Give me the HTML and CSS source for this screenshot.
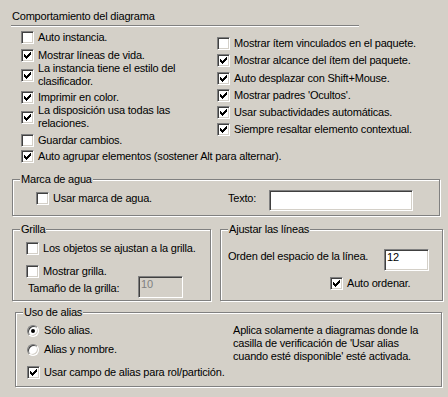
FILE: index.html
```html
<!DOCTYPE html>
<html lang="es">
<head>
<meta charset="utf-8">
<title>Comportamiento del diagrama</title>
<link rel="stylesheet" href="styles.css">
</head>
<body>
<div class="dialog">
  <div class="heading">Comportamiento del diagrama</div>
  <div class="sep"></div>

  <div class="cols">
    <div class="col">
      <div class="opt"><span class="cb"></span><span>Auto instancia.</span></div>
      <div class="opt mt5"><span class="cb on"><svg width="11" height="11" viewBox="0 0 11 11"><path d="M2 4h1v3H2zM3 5h1v3H3zM4 6h1v3H4zM5 5h1v3H5zM6 4h1v3H6zM7 3h1v3H7zM8 2h1v3H8z"/></svg></span><span>Mostrar líneas de vida.</span></div>
      <div class="opt"><span class="cb on"><svg width="11" height="11" viewBox="0 0 11 11"><path d="M2 4h1v3H2zM3 5h1v3H3zM4 6h1v3H4zM5 5h1v3H5zM6 4h1v3H6zM7 3h1v3H7zM8 2h1v3H8z"/></svg></span><span>La instancia tiene el estilo del<br>clasificador.</span></div>
      <div class="opt mt3"><span class="cb on"><svg width="11" height="11" viewBox="0 0 11 11"><path d="M2 4h1v3H2zM3 5h1v3H3zM4 6h1v3H4zM5 5h1v3H5zM6 4h1v3H6zM7 3h1v3H7zM8 2h1v3H8z"/></svg></span><span>Imprimir en color.</span></div>
      <div class="opt"><span class="cb on"><svg width="11" height="11" viewBox="0 0 11 11"><path d="M2 4h1v3H2zM3 5h1v3H3zM4 6h1v3H4zM5 5h1v3H5zM6 4h1v3H6zM7 3h1v3H7zM8 2h1v3H8z"/></svg></span><span>La disposición usa todas las<br>relaciones.</span></div>
      <div class="opt mt4"><span class="cb"></span><span>Guardar cambios.</span></div>
    </div>
    <div class="col col-right">
      <div class="opt"><span class="cb"></span><span>Mostrar ítem vinculados en el paquete.</span></div>
      <div class="opt mt4"><span class="cb on"><svg width="11" height="11" viewBox="0 0 11 11"><path d="M2 4h1v3H2zM3 5h1v3H3zM4 6h1v3H4zM5 5h1v3H5zM6 4h1v3H6zM7 3h1v3H7zM8 2h1v3H8z"/></svg></span><span>Mostrar alcance del ítem del paquete.</span></div>
      <div class="opt mt5"><span class="cb on"><svg width="11" height="11" viewBox="0 0 11 11"><path d="M2 4h1v3H2zM3 5h1v3H3zM4 6h1v3H4zM5 5h1v3H5zM6 4h1v3H6zM7 3h1v3H7zM8 2h1v3H8z"/></svg></span><span>Auto desplazar con Shift+Mouse.</span></div>
      <div class="opt mt4"><span class="cb on"><svg width="11" height="11" viewBox="0 0 11 11"><path d="M2 4h1v3H2zM3 5h1v3H3zM4 6h1v3H4zM5 5h1v3H5zM6 4h1v3H6zM7 3h1v3H7zM8 2h1v3H8z"/></svg></span><span>Mostrar padres 'Ocultos'.</span></div>
      <div class="opt mt4"><span class="cb on"><svg width="11" height="11" viewBox="0 0 11 11"><path d="M2 4h1v3H2zM3 5h1v3H3zM4 6h1v3H4zM5 5h1v3H5zM6 4h1v3H6zM7 3h1v3H7zM8 2h1v3H8z"/></svg></span><span>Usar subactividades automáticas.</span></div>
      <div class="opt mt4"><span class="cb on"><svg width="11" height="11" viewBox="0 0 11 11"><path d="M2 4h1v3H2zM3 5h1v3H3zM4 6h1v3H4zM5 5h1v3H5zM6 4h1v3H6zM7 3h1v3H7zM8 2h1v3H8z"/></svg></span><span>Siempre resaltar elemento contextual.</span></div>
    </div>
  </div>
  <div class="opt wide"><span class="cb on"><svg width="11" height="11" viewBox="0 0 11 11"><path d="M2 4h1v3H2zM3 5h1v3H3zM4 6h1v3H4zM5 5h1v3H5zM6 4h1v3H6zM7 3h1v3H7zM8 2h1v3H8z"/></svg></span><span>Auto agrupar elementos (sostener Alt para alternar).</span></div>

  <div class="group watermark">
    <span class="legend">Marca de agua</span>
    <div class="wm-row">
      <div class="opt wm-check"><span class="cb"></span><span>Usar marca de agua.</span></div>
      <span class="wm-label">Texto:</span>
      <div class="edit wm-edit"></div>
    </div>
  </div>

  <div class="pair">
    <div class="group grilla">
      <span class="legend">Grilla</span>
      <div class="g-rows">
        <div class="opt"><span class="cb"></span><span>Los objetos se ajustan a la grilla.</span></div>
        <div class="opt mt10"><span class="cb"></span><span>Mostrar grilla.</span></div>
        <div class="size-row">
          <span class="size-label">Tamaño de la grilla:</span>
          <div class="edit dis small">10</div>
        </div>
      </div>
    </div>
    <div class="group ajustar">
      <span class="legend">Ajustar las líneas</span>
      <div class="a-row">
        <span class="a-label">Orden del espacio de la línea.</span>
        <div class="edit small">12</div>
      </div>
      <div class="opt a-check"><span class="cb on"><svg width="11" height="11" viewBox="0 0 11 11"><path d="M2 4h1v3H2zM3 5h1v3H3zM4 6h1v3H4zM5 5h1v3H5zM6 4h1v3H6zM7 3h1v3H7zM8 2h1v3H8z"/></svg></span><span>Auto ordenar.</span></div>
    </div>
  </div>

  <div class="group alias">
    <span class="legend">Uso de alias</span>
    <div class="alias-body">
      <div class="alias-opts">
        <div class="opt mt11"><span class="rb on"></span><span>Sólo alias.</span></div>
        <div class="opt mt6"><span class="rb"></span><span>Alias y nombre.</span></div>
        <div class="opt mt10"><span class="cb on"><svg width="11" height="11" viewBox="0 0 11 11"><path d="M2 4h1v3H2zM3 5h1v3H3zM4 6h1v3H4zM5 5h1v3H5zM6 4h1v3H6zM7 3h1v3H7zM8 2h1v3H8z"/></svg></span><span>Usar campo de alias para rol/partición.</span></div>
      </div>
      <div class="alias-note">Aplica solamente a diagramas donde la<br>casilla de verificación de 'Usar alias<br>cuando esté disponible' esté activada.</div>
    </div>
  </div>
</div>
</body>
</html>
```

FILE: styles.css
```css
* { box-sizing: border-box; }

body {
  margin: 0;
  background: #d4d0c8;
  font-family: "Liberation Sans", Arial, sans-serif;
  font-size: 11px;
  line-height: 13px;
  color: #000;
  letter-spacing: -0.2px;
}

.dialog {
  width: 448px;
  height: 397px;
  overflow: hidden;
  padding-top: 10px;
}

.heading {
  margin-left: 12px;
  height: 13px;
}

.sep {
  margin: 2px 0 0 11px;
  width: 348px;
  height: 2px;
  border-top: 1px solid #808080;
  border-bottom: 1px solid #fff;
}

.cols {
  display: grid;
  grid-template-columns: 196px 1fr;
  margin-top: 4px;
  padding-left: 21px;
}

.col-right { padding-top: 6px; }

.opt {
  display: flex;
  align-items: center;
  gap: 4px;
  white-space: nowrap;
}

.mt3 { margin-top: 3px; }
.mt4 { margin-top: 4px; }
.mt5 { margin-top: 5px; }
.mt6 { margin-top: 6px; }
.mt10 { margin-top: 10px; }
.mt11 { margin-top: 11px; }

.cb {
  flex: none;
  width: 13px;
  height: 13px;
  border: 1px solid;
  border-color: #808080 #fff #fff #808080;
  box-shadow: inset 1px 1px 0 #404040, inset -1px -1px 0 #d4d0c8;
  background: #fff;
}

.cb svg {
  display: block;
  shape-rendering: crispEdges;
  fill: #000;
}

.rb {
  flex: none;
  width: 12px;
  height: 12px;
  margin-right: 1px;
  border-radius: 50%;
  border: 1px solid;
  border-color: #808080 #fff #fff #808080;
  box-shadow: inset 1px 1px 0 #404040, inset -1px -1px 0 #d4d0c8;
  background: #fff;
  display: flex;
  align-items: center;
  justify-content: center;
}

.rb.on::after {
  content: "";
  width: 4px;
  height: 4px;
  border-radius: 50%;
  background: #000;
}

.wide { margin: 3px 0 0 21px; }

.group {
  position: relative;
  border: 1px solid #808080;
  box-shadow: 1px 1px 0 #fff, inset 1px 1px 0 #fff;
}

.legend {
  position: absolute;
  top: -7px;
  left: 7px;
  padding: 0 1px;
  background: #d4d0c8;
  white-space: nowrap;
}

.edit {
  border: 1px solid;
  border-color: #808080 #fff #fff #808080;
  box-shadow: inset 1px 1px 0 #404040, inset -1px -1px 0 #d4d0c8;
  background: #fff;
  padding: 1px 0 0 2px;
}

.edit.dis {
  background: #d4d0c8;
  color: #808080;
}

.small {
  width: 45px;
  height: 22px;
}

/* Marca de agua */
.watermark {
  margin: 16px 0 0 12px;
  width: 428px;
  height: 37px;
}

.wm-row {
  display: flex;
  align-items: flex-start;
  padding: 10px 0 0 23px;
}

.wm-check {
  width: 192px;
  margin-top: 2px;
}

.wm-label {
  width: 41px;
  margin-top: 2px;
}

.wm-edit {
  width: 144px;
  height: 21px;
}

/* Grilla / Ajustar */
.pair {
  display: flex;
  margin-top: 13px;
}

.grilla {
  margin-left: 12px;
  width: 199px;
  height: 72px;
}

.g-rows { padding: 12px 0 0 13px; }

.size-row {
  display: flex;
  align-items: flex-start;
  margin-top: -2px;
}

.size-label {
  width: 110px;
  margin: 6px 0 0 2px;
}

.ajustar {
  margin-left: 9px;
  width: 223px;
  height: 72px;
}

.a-row {
  display: flex;
  align-items: flex-start;
  margin-top: 19px;
  padding-left: 7px;
}

.a-label {
  width: 156px;
  margin-top: 1px;
}

.a-check {
  margin-top: 6px;
  padding-left: 109px;
}

/* Uso de alias */
.alias {
  margin: 11px 0 0 15px;
  width: 427px;
  height: 75px;
}

.alias-body {
  display: flex;
  padding-left: 11px;
}

.alias-opts { width: 206px; }

.alias-note { margin-top: 11px; }
```
